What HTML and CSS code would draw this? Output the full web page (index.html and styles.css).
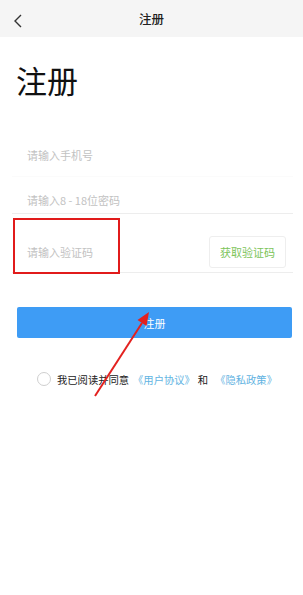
FILE: index.html
```html
<!DOCTYPE html>
<html lang="zh-CN">
<head>
    <meta charset="UTF-8">
    <meta name="viewport" content="width=device-width, initial-scale=1.0">
    <title>注册</title>
    <link rel="stylesheet" href="styles.css">
</head>
<body>
    <header class="nav-bar">
        <svg class="back-icon" width="10" height="14" viewBox="0 0 10 14">
            <polyline points="8,1 2,7 8,13" fill="none" stroke="#333" stroke-width="1.4"/>
        </svg>
        <span class="nav-title">注册</span>
    </header>

    <main class="page">
        <h1 class="page-title">注册</h1>

        <div class="form">
            <div class="field field-phone">
                <span class="placeholder">请输入手机号</span>
            </div>
            <div class="field field-password">
                <span class="placeholder">请输入8 - 18位密码</span>
            </div>
            <div class="field field-code">
                <span class="placeholder">请输入验证码</span>
                <button class="code-btn">获取验证码</button>
            </div>
        </div>

        <button class="submit-btn">注册</button>

        <div class="agreement">
            <span class="radio"></span>
            <span class="agree-text">我已阅读并同意</span>
            <span class="link">《用户协议》</span>
            <span class="agree-text and">和</span>
            <span class="link">《隐私政策》</span>
        </div>
    </main>

    <!-- annotation overlay -->
    <div class="highlight-box"></div>
    <svg class="arrow" width="303" height="595" viewBox="0 0 303 595">
        <line x1="95" y1="396" x2="142" y2="323" stroke="#e3211f" stroke-width="2"/>
        <polygon points="149,312 146.5,326 137.5,320" fill="#e3211f"/>
    </svg>
</body>
</html>
```

FILE: styles.css
```css
* {
    margin: 0;
    padding: 0;
    box-sizing: border-box;
}

body {
    font-family: "Noto Sans CJK SC", "Noto Sans", sans-serif;
    background-color: #fff;
    width: 303px;
    height: 595px;
    position: relative;
    overflow: hidden;
    color: #222;
}

.nav-bar {
    height: 37px;
    background-color: #f5f5f5;
    display: flex;
    align-items: center;
    justify-content: center;
    position: relative;
}

.back-icon {
    position: absolute;
    left: 13px;
    top: 14px;
}

.nav-title {
    font-size: 12.5px;
    font-weight: 500;
    color: #222;
}

.page {
    padding: 0 10px 0 12px;
}

.page-title {
    font-size: 31px;
    font-weight: 400;
    line-height: 37px;
    margin: 24px 0 0 4px;
    color: #111;
}

.form {
    margin-top: 35px;
}

.field {
    display: flex;
    align-items: center;
    border-bottom: 1px solid #f3f3f3;
    padding-left: 15px;
}

.field-phone {
    height: 44px;
    border-bottom-color: #fbfbfb;
}

.field-password {
    height: 37px;
    padding-top: 9px;
    border-bottom-color: #ededed;
}

.field-code {
    height: 59px;
    padding-top: 17px;
    justify-content: space-between;
    border-bottom-color: #ededed;
}

.placeholder {
    font-size: 11px;
    color: #c2c2c2;
}

.code-btn {
    width: 77px;
    height: 32px;
    margin-right: 7px;
    background: #fff;
    border: 1px solid #eeeeee;
    border-radius: 3px;
    font-family: inherit;
    font-size: 11px;
    color: #7cc45a;
}

.submit-btn {
    display: block;
    width: 275px;
    height: 31px;
    margin: 34px 0 0 5px;
    background-color: #3e9cf5;
    border: none;
    border-radius: 2px;
    color: #fff;
    font-family: inherit;
    font-size: 11px;
}

.agreement {
    display: flex;
    align-items: center;
    height: 20px;
    margin-top: 31px;
    padding-left: 25px;
    font-size: 10.3px;
}

.radio {
    width: 14px;
    height: 14px;
    border: 1px solid #cfcfcf;
    border-radius: 50%;
    margin-right: 6px;
}

.agree-text {
    color: #222;
}

.and {
    margin: 0 3px;
}

.link {
    color: #62b3e2;
    margin-left: 4px;
}

.highlight-box {
    position: absolute;
    left: 13px;
    top: 218px;
    width: 107px;
    height: 56px;
    border: 2px solid #e11b1b;
}

.arrow {
    position: absolute;
    left: 0;
    top: 0;
}
```
